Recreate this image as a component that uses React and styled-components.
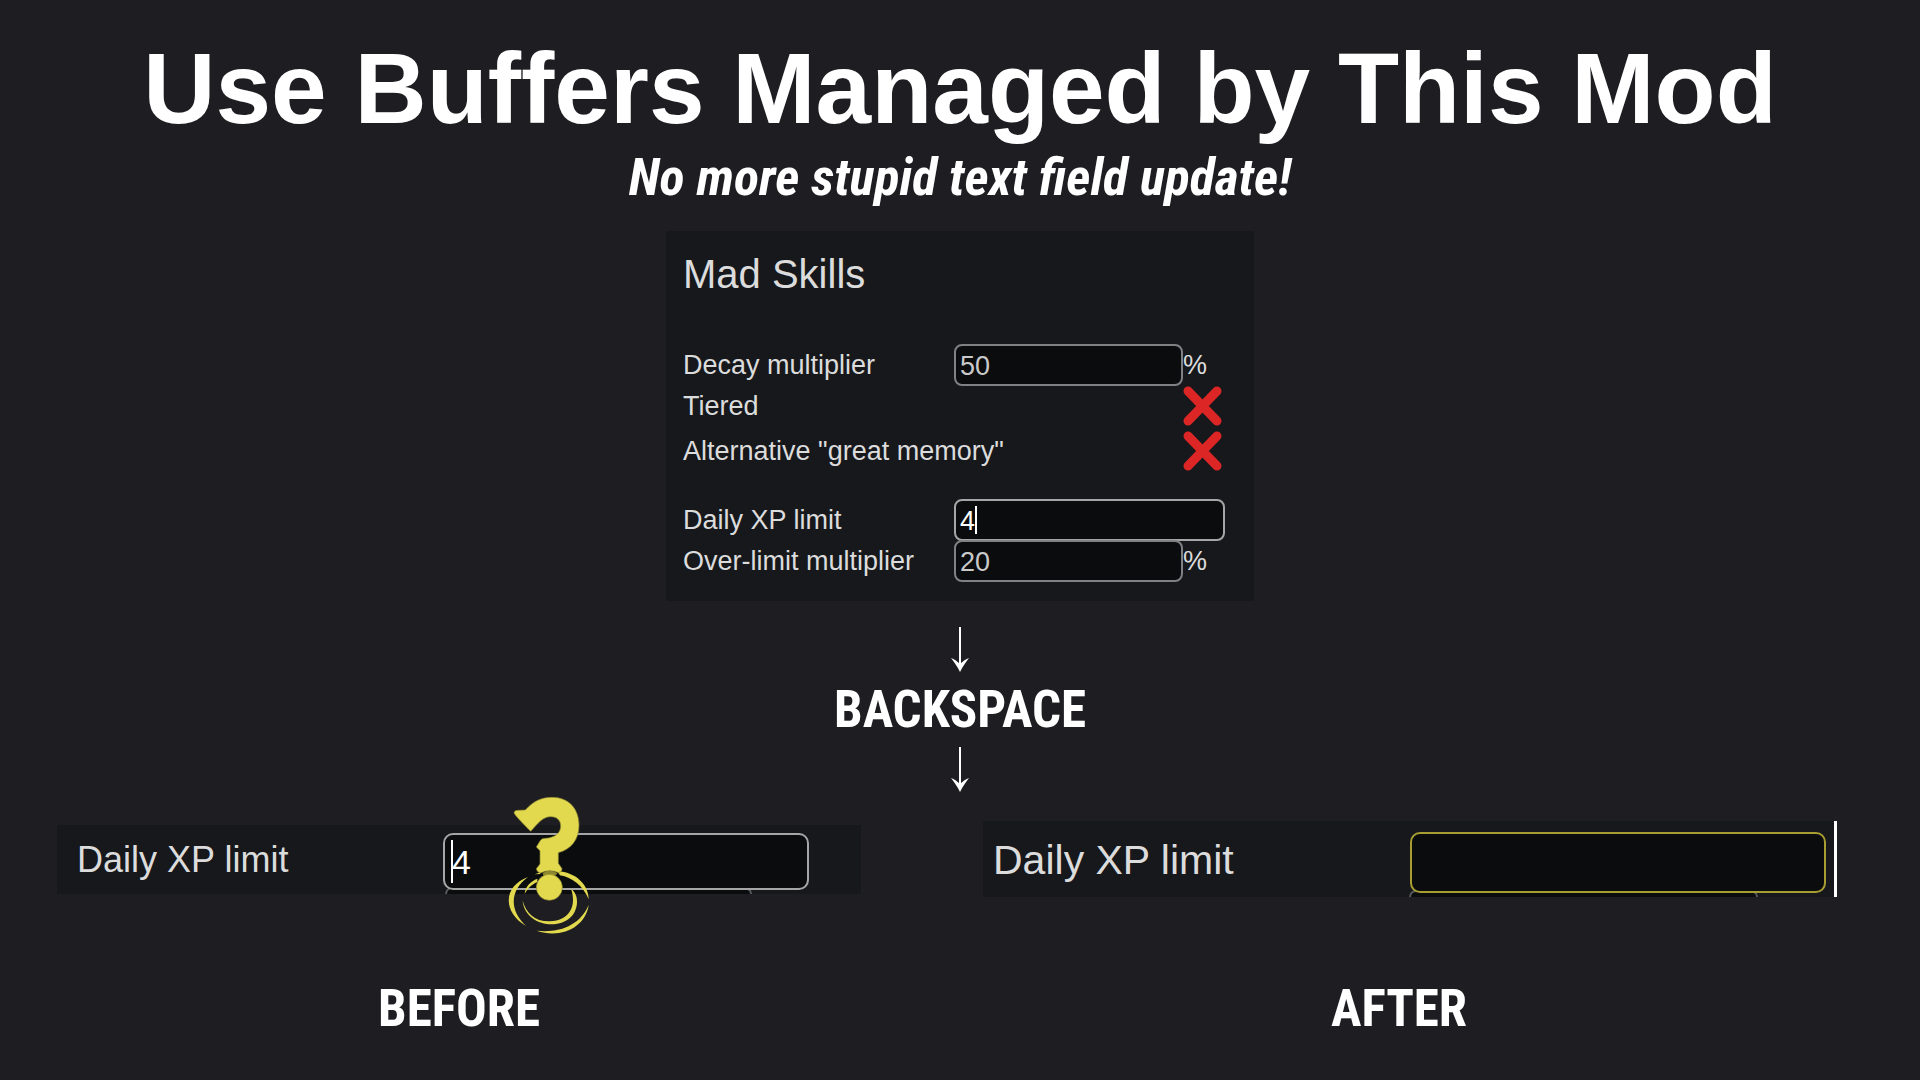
import { useState } from 'react';
import styled, { createGlobalStyle } from 'styled-components';
import { Check } from 'lucide-react';

const App = () => {
  const [decay, setDecay] = useState('50');
  const [limit, setLimit] = useState('4');
  const [overLimit, setOverLimit] = useState('20');

  return (
    <Page>
      <GlobalStyle />
      <Title>Use Buffers Managed by This Mod</Title>
      <Subtitle>No more stupid text field update!</Subtitle>

      <Panel>
        <PanelTitle>Mad Skills</PanelTitle>
        <Row>
          <Label htmlFor="decay">Decay multiplier</Label>
          <Field>
            <TextInput
              id="decay"
              value={decay}
              onChange={(e) => setDecay(e.target.value)}
            />
          </Field>
          <Unit>%</Unit>
        </Row>
        <Row>
          <Label htmlFor="tiered">Tiered</Label>
          <Toggle id="tiered" />
        </Row>
        <Row $gap={5}>
          <Label htmlFor="memory">Alternative "great memory"</Label>
          <Toggle id="memory" />
        </Row>
        <Row $gap={28}>
          <Label htmlFor="limit">Daily XP limit</Label>
          <Field $wide>
            <TextInput
              id="limit"
              $active
              value={limit}
              onChange={(e) => setLimit(e.target.value)}
            />
            <Caret $left={21} />
          </Field>
        </Row>
        <Row $gap={-1}>
          <Label htmlFor="overLimit">Over-limit multiplier</Label>
          <Field>
            <TextInput
              id="overLimit"
              value={overLimit}
              onChange={(e) => setOverLimit(e.target.value)}
            />
          </Field>
          <Unit>%</Unit>
        </Row>
      </Panel>

      <Step>
        <Arrow />
        <StepName>BACKSPACE</StepName>
        <Arrow />
      </Step>

      <Compare>
        <BeforeStrip>
          <Peek />
          <StripLabel htmlFor="before">Daily XP limit</StripLabel>
          <StripField>
            <StripInput id="before" defaultValue="4" />
            <Caret $left={8} />
            <QuestionMark />
          </StripField>
        </BeforeStrip>
        <AfterStrip>
          <Peek $after />
          <StripLabel htmlFor="after">Daily XP limit</StripLabel>
          <StripField>
            <StripInput id="after" $after defaultValue="" />
          </StripField>
        </AfterStrip>
      </Compare>
      <Captions>
        <Caption>BEFORE</Caption>
        <Caption>AFTER</Caption>
      </Captions>
    </Page>
  );
};

const Toggle = ({ id }) => {
  const [on, setOn] = useState(false);
  return (
    <ToggleBox>
      <input
        id={id}
        type="checkbox"
        checked={on}
        onChange={() => setOn(!on)}
      />
      {on ? (
        <Check size={40} color="#3fbf4a" strokeWidth={4} />
      ) : (
        <svg width="40" height="40" viewBox="0 0 40 40">
          <path
            d="M5 5 L34 35 M34 5 L5 35"
            stroke="#dc2626"
            strokeWidth="9"
            strokeLinecap="round"
          />
        </svg>
      )}
    </ToggleBox>
  );
};

const Arrow = () => (
  <svg width="18" height="45" viewBox="0 0 18 45" aria-hidden="true">
    <path d="M8 0 H10 V39 H8 Z" fill="#fff" />
    <path
      d="M0 31 C3 32 6 34 9 37 C12 34 15 32 18 31 C15 35 12 39 9 45 C6 39 3 35 0 31 Z"
      fill="#fff"
    />
  </svg>
);

const QuestionMark = () => (
  <Mark viewBox="236 45 246 420" aria-hidden="true">
    {/* ripples */}
    <path d="M296 291 C222 318 218 395 290 438 C240 392 240 332 296 291 Z" />
    <path d="M384 274 C440 276 478 315 478 358 C462 318 428 292 392 286 Z" />
    <path d="M478 374 C470 440 396 478 322 452 C392 460 454 434 478 374 Z" />
    <path d="M280 362 C288 452 438 458 443 368 C444 350 438 336 425 326 C442 374 424 422 360 424 C314 424 290 398 280 362 Z" />
    <path d="M286 342 C288 318 304 304 324 296 L324 306 C306 314 296 324 286 342 Z" />
    <path d="M316 283 L334 277 L332 282 Z" />
    {/* hook */}
    <path
      d="M254 98 Q256 90 266 91 L288 90 C312 64 336 52 368 52 C420 52 449 88 449 136 C449 180 424 209 387 218 L387 250 L398 266 Q398 276 388 278 Q360 266 334 279 Q322 276 321 266 L332 252 L332 212 L321 201 L334 180 Q338 175 348 175 C378 173 394 158 394 138 C394 120 382 110 364 110 C340 110 326 130 304 154 Q256 106 254 98 Z"
      stroke="#8d8830"
      strokeWidth="2"
    />
    <path d="M340 279 Q360 266 384 279 L380 286 H342 Z" fill="#8d8830" />
    <circle cx="360" cy="322" r="39" stroke="#8d8830" strokeWidth="2" />
  </Mark>
);

const GlobalStyle = createGlobalStyle`
  * {
    box-sizing: border-box;
  }
  body {
    margin: 0;
    background-color: #1e1d22;
  }
`;

const condensed = `'Roboto Condensed', 'Liberation Sans', sans-serif`;

const Page = styled.main`
  min-height: 100vh;
  padding-top: 28px;
  overflow: hidden;
  display: flex;
  flex-direction: column;
  align-items: center;
  color: #ffffff;
  background-color: #1e1d22;
  font-family: 'Liberation Sans', Arial, sans-serif;
`;
const Title = styled.h1`
  margin: 0;
  font-size: 100px;
  line-height: 120px;
  font-weight: 700;
  text-align: center;
`;
const Subtitle = styled.p`
  margin: 0;
  font-family: ${condensed};
  font-size: 52px;
  line-height: 60px;
  font-weight: 700;
  font-style: italic;
  text-align: center;
`;

const Panel = styled.section`
  width: 588px;
  max-width: 100%;
  margin-top: 23px;
  padding: 19px 29px 19px 17px;
  background-color: #17181c;
  color: #dcdcdc;
`;
const PanelTitle = styled.h2`
  margin: 0 0 46px;
  font-size: 40px;
  line-height: 48px;
  font-weight: 400;
`;
const Row = styled.div`
  display: grid;
  grid-template-columns: minmax(0, 1fr) 229px 42px;
  align-items: center;
  min-height: 40px;
  margin-top: ${({ $gap }) => $gap || 0}px;
`;
const Label = styled.label`
  padding-bottom: 1px;
  font-size: 27px;
  line-height: 32px;
  white-space: nowrap;
`;
const Unit = styled.span`
  padding-bottom: 1px;
  font-size: 27px;
  line-height: 32px;
`;
const Field = styled.div`
  position: relative;
  grid-column: ${({ $wide }) => ($wide ? '2 / 4' : '2')};
`;
const TextInput = styled.input`
  display: block;
  width: 100%;
  height: 42px;
  padding: 2px 4px 0;
  border: 2px solid ${({ $active }) => ($active ? '#a6a6a7' : '#808183')};
  border-radius: 8px;
  outline: 0;
  background-color: #0b0c0e;
  color: ${({ $active }) => ($active ? '#ffffff' : '#c9c9ca')};
  font-family: inherit;
  font-size: 27px;
`;
const Caret = styled.span`
  position: absolute;
  top: 7px;
  bottom: 7px;
  left: ${({ $left }) => $left}px;
  width: 2px;
  background-color: #ffffff;
`;
const ToggleBox = styled.span`
  position: relative;
  grid-column: 3;
  height: 40px;
  input {
    position: absolute;
    inset: 0;
    width: 40px;
    height: 40px;
    margin: 0;
    opacity: 0;
    cursor: pointer;
  }
`;

const Step = styled.div`
  display: flex;
  flex-direction: column;
  align-items: center;
  margin-top: 26px;
`;
const StepName = styled.p`
  margin: 0;
  font-family: ${condensed};
  font-size: 51px;
  line-height: 75px;
  font-weight: 700;
`;

const Compare = styled.div`
  align-self: stretch;
  display: grid;
  grid-template-columns: 804fr 854fr;
  column-gap: 122px;
  align-items: center;
  margin-top: 29px;
  padding: 0 83px 0 57px;
`;
const Strip = styled.div`
  position: relative;
  display: flex;
  align-items: center;
  justify-content: space-between;
  background-color: #17181c;
  color: #dcdcdc;
`;
const BeforeStrip = styled(Strip)`
  height: 69px;
  padding: 4px 52px 0 20px;
  font-size: 36px;
`;
const AfterStrip = styled(Strip)`
  height: 76px;
  padding: 6px 8px 0 10px;
  border-right: 3px solid #ffffff;
  font-size: 41px;
`;
const StripLabel = styled.label`
  padding-bottom: 3px;
  white-space: nowrap;
`;
const StripField = styled.div`
  position: relative;
  width: 50%;
`;
const StripInput = styled.input`
  display: block;
  width: 100%;
  height: ${({ $after }) => ($after ? 61 : 57)}px;
  padding: 2px 7px 0;
  border: 2px solid ${({ $after }) => ($after ? '#a79d30' : '#a6a6a7')};
  border-radius: 10px;
  outline: 0;
  background-color: #0b0c0e;
  color: #ffffff;
  font-family: inherit;
  font-size: 34px;
`;
// top edge of the next field, cut off by the strip
const Peek = styled.div`
  position: absolute;
  bottom: 0;
  left: ${({ $after }) => ($after ? '50%' : '48.2%')};
  width: ${({ $after }) => ($after ? '41.1%' : '38.2%')};
  height: 7px;
  border: solid #55585b;
  border-width: 2px 2px 0;
  border-radius: 7px 7px 0 0;
  background-color: #0b0c0e;
`;
const Mark = styled.svg`
  position: absolute;
  left: 65px;
  top: -38px;
  width: 82px;
  height: 140px;
  fill: #e2d94e;
  pointer-events: none;
`;

const Captions = styled.div`
  align-self: stretch;
  display: grid;
  grid-template-columns: 1fr 1fr;
  column-gap: 136px;
  margin-top: 82px;
  padding: 0 119px 0 57px;
`;
const Caption = styled.p`
  margin: 0;
  font-family: ${condensed};
  font-size: 51px;
  line-height: 60px;
  font-weight: 700;
  text-align: center;
`;

export default App;
